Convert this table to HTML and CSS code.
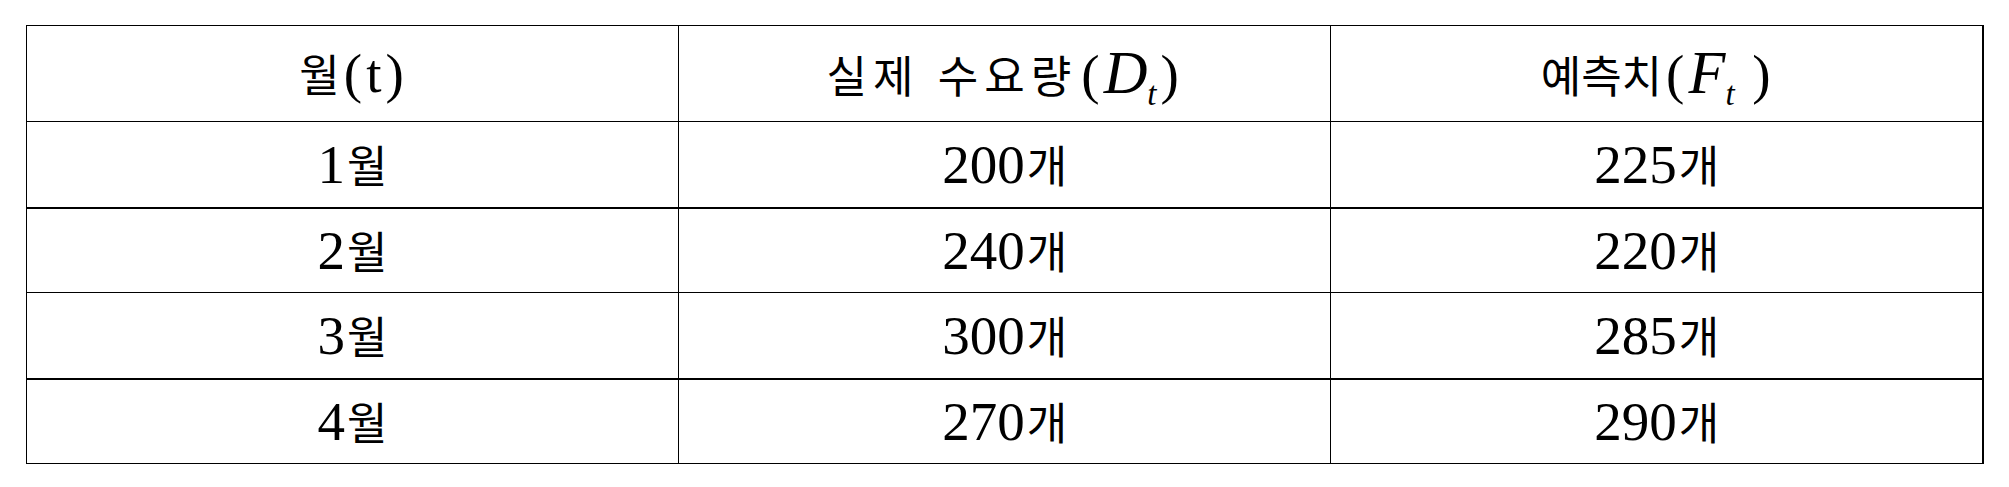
FILE: index.html
```html
<!DOCTYPE html>
<html lang="ko">
<head>
<meta charset="utf-8">
<title>수요 예측표</title>
<link rel="stylesheet" href="styles.css">
</head>
<body>
<table class="demand">
  <tr class="head">
    <td><span class="ko">월</span><span class="p">(</span>t<span class="p">)</span></td>
    <td><span class="ko wide">실제&nbsp;수요량</span><span class="p">(</span><i class="big">D</i><sub><i>t</i></sub><span class="p">)</span></td>
    <td><span class="ko">예측치</span><span class="p">(</span><i class="big">F</i><sub><i>t</i></sub>&nbsp;<span class="p">)</span></td>
  </tr>
  <tr class="r1"><td>1<span class="ko">월</span></td><td>200<span class="ko">개</span></td><td>225<span class="ko">개</span></td></tr>
  <tr class="r2"><td>2<span class="ko">월</span></td><td>240<span class="ko">개</span></td><td>220<span class="ko">개</span></td></tr>
  <tr class="r3"><td>3<span class="ko">월</span></td><td>300<span class="ko">개</span></td><td>285<span class="ko">개</span></td></tr>
  <tr class="r4"><td>4<span class="ko">월</span></td><td>270<span class="ko">개</span></td><td>290<span class="ko">개</span></td></tr>
</table>
</body>
</html>
```

FILE: styles.css
```css
html, body {
  margin: 0;
  padding: 0;
  background: #fff;
}

.demand {
  margin: 25px 0 0 26px;
  width: 1958px;
  border-collapse: collapse;
  table-layout: fixed;
  font-family: "Liberation Serif", "Noto Sans CJK KR", serif;
  font-size: 55px;
  color: #000;
  border-right: 2px solid #000;
}

.demand td {
  border: 1px solid #000;
  text-align: center;
  vertical-align: middle;
  padding: 0;
  line-height: 1;
}

.demand td:last-child {
  border-right: 2px solid #000;
}

.demand .head { height: 96px; }
.demand .r1 { height: 86px; }
.demand .r2 { height: 85px; }
.demand .r3 { height: 86px; }
.demand .r4 { height: 85px; }

.demand .r1 td,
.demand .r3 td {
  border-bottom: 2px solid #000;
}

.demand .ko {
  font-family: "Noto Sans CJK KR", sans-serif;
  font-size: 0.8em;
  margin-left: 2px;
}

.demand .wide {
  letter-spacing: 6px;
  margin-left: 0;
}

.demand .p {
  margin: 0 4px;
}

.demand i {
  font-style: italic;
}

.demand .big {
  font-size: 1.1em;
}

.demand sub {
  font-size: 0.6em;
  vertical-align: -0.35em;
  line-height: 0;
}
```
